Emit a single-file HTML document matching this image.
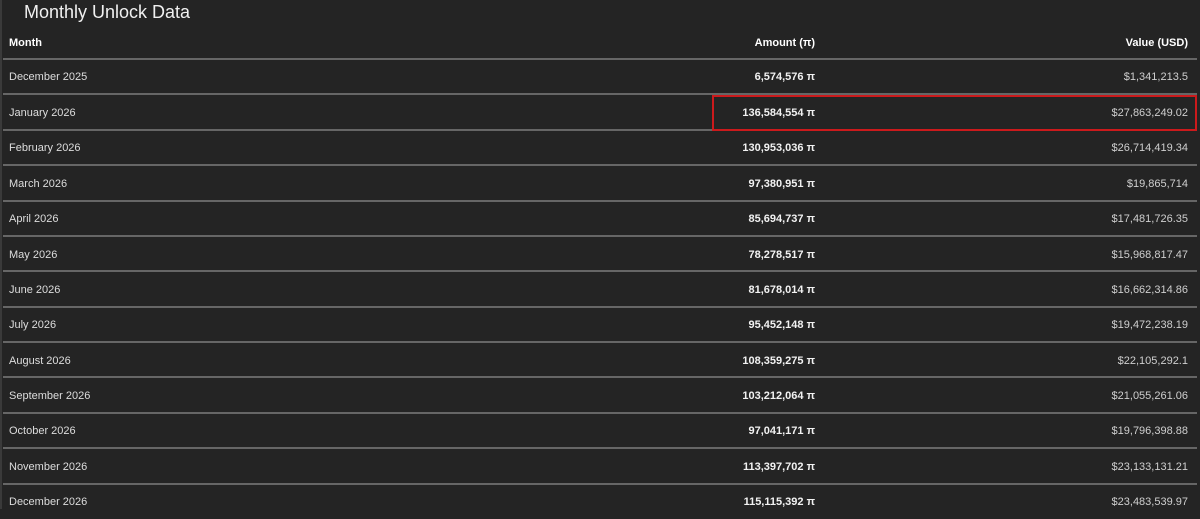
<!DOCTYPE html>
<html><head><style>
html,body{margin:0;padding:0;}
body{width:1200px;height:509px;background:#242424;position:relative;overflow:hidden;font-family:"Liberation Sans",sans-serif;color:#ddd;}
.t{position:absolute;left:24px;top:0px;font-size:18px;color:#f0f0f0;line-height:24px;}
.r{position:absolute;left:0;width:1200px;height:35px;font-size:11px;}
.r span{position:absolute;top:50%;transform:translateY(-50%);white-space:nowrap;}
.m{left:9px;color:#ddd;}
.a{right:385px;font-weight:bold;color:#f2f2f2;}
.v{right:12px;color:#cfcfcf;}
.h span{color:#fff;font-weight:bold;}
.l{position:absolute;left:3px;right:3px;height:2px;background:#666;}
.box{position:absolute;left:712px;top:95px;width:481px;height:32px;border:2px solid #cc1a1c;}
.edge{position:absolute;left:0;top:0;width:2px;height:509px;background:#3a3a3a;}
</style></head><body>
<div class="edge"></div>
<div class="t">Monthly Unlock Data</div>
<div class="r h" style="top:27px;height:32px"><span class="m">Month</span><span class="a">Amount (π)</span><span class="v">Value (USD)</span></div>
<div class="l" style="top:58px"></div>
<div class="r" style="top:59px"><span class="m">December 2025</span><span class="a">6,574,576 π</span><span class="v">$1,341,213.5</span></div>
<div class="l" style="top:93px"></div>
<div class="r" style="top:95px"><span class="m">January 2026</span><span class="a">136,584,554 π</span><span class="v">$27,863,249.02</span></div>
<div class="l" style="top:129px"></div>
<div class="r" style="top:130px"><span class="m">February 2026</span><span class="a">130,953,036 π</span><span class="v">$26,714,419.34</span></div>
<div class="l" style="top:164px"></div>
<div class="r" style="top:166px"><span class="m">March 2026</span><span class="a">97,380,951 π</span><span class="v">$19,865,714</span></div>
<div class="l" style="top:200px"></div>
<div class="r" style="top:201px"><span class="m">April 2026</span><span class="a">85,694,737 π</span><span class="v">$17,481,726.35</span></div>
<div class="l" style="top:235px"></div>
<div class="r" style="top:237px"><span class="m">May 2026</span><span class="a">78,278,517 π</span><span class="v">$15,968,817.47</span></div>
<div class="l" style="top:270px"></div>
<div class="r" style="top:272px"><span class="m">June 2026</span><span class="a">81,678,014 π</span><span class="v">$16,662,314.86</span></div>
<div class="l" style="top:306px"></div>
<div class="r" style="top:307px"><span class="m">July 2026</span><span class="a">95,452,148 π</span><span class="v">$19,472,238.19</span></div>
<div class="l" style="top:341px"></div>
<div class="r" style="top:343px"><span class="m">August 2026</span><span class="a">108,359,275 π</span><span class="v">$22,105,292.1</span></div>
<div class="l" style="top:376px"></div>
<div class="r" style="top:378px"><span class="m">September 2026</span><span class="a">103,212,064 π</span><span class="v">$21,055,261.06</span></div>
<div class="l" style="top:412px"></div>
<div class="r" style="top:413px"><span class="m">October 2026</span><span class="a">97,041,171 π</span><span class="v">$19,796,398.88</span></div>
<div class="l" style="top:447px"></div>
<div class="r" style="top:449px"><span class="m">November 2026</span><span class="a">113,397,702 π</span><span class="v">$23,133,131.21</span></div>
<div class="l" style="top:483px"></div>
<div class="r" style="top:484px"><span class="m">December 2026</span><span class="a">115,115,392 π</span><span class="v">$23,483,539.97</span></div>
<div class="box"></div>
</body></html>
